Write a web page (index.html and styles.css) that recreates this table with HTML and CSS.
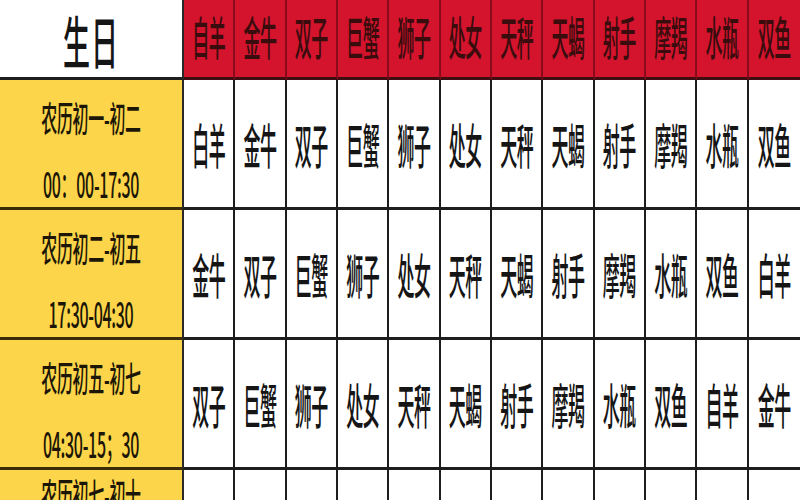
FILE: index.html
```html
<!DOCTYPE html>
<html lang="zh">
<head>
<meta charset="utf-8">
<title>生日星座对照表</title>
<link rel="stylesheet" href="styles.css">
</head>
<body>
<div class="chart">
  <div class="row head">
    <div class="title"><span class="t">生日</span></div>
    <div class="hsign"><span class="t">自羊</span></div>
    <div class="hsign"><span class="t">金牛</span></div>
    <div class="hsign"><span class="t">双子</span></div>
    <div class="hsign"><span class="t">巨蟹</span></div>
    <div class="hsign"><span class="t">狮子</span></div>
    <div class="hsign"><span class="t">处女</span></div>
    <div class="hsign"><span class="t">天秤</span></div>
    <div class="hsign"><span class="t">天蝎</span></div>
    <div class="hsign"><span class="t">射手</span></div>
    <div class="hsign"><span class="t">摩羯</span></div>
    <div class="hsign"><span class="t">水瓶</span></div>
    <div class="hsign"><span class="t">双鱼</span></div>
  </div>
  <div class="row">
    <div class="label"><span class="t">农历初一-初二</span><span class="t">00：00-17:30</span></div>
    <div class="sign"><span class="t">白羊</span></div>
    <div class="sign"><span class="t">金牛</span></div>
    <div class="sign"><span class="t">双子</span></div>
    <div class="sign"><span class="t">巨蟹</span></div>
    <div class="sign"><span class="t">狮子</span></div>
    <div class="sign"><span class="t">处女</span></div>
    <div class="sign"><span class="t">天秤</span></div>
    <div class="sign"><span class="t">天蝎</span></div>
    <div class="sign"><span class="t">射手</span></div>
    <div class="sign"><span class="t">摩羯</span></div>
    <div class="sign"><span class="t">水瓶</span></div>
    <div class="sign"><span class="t">双鱼</span></div>
  </div>
  <div class="row">
    <div class="label"><span class="t">农历初二-初五</span><span class="t">17:30-04:30</span></div>
    <div class="sign"><span class="t">金牛</span></div>
    <div class="sign"><span class="t">双子</span></div>
    <div class="sign"><span class="t">巨蟹</span></div>
    <div class="sign"><span class="t">狮子</span></div>
    <div class="sign"><span class="t">处女</span></div>
    <div class="sign"><span class="t">天秤</span></div>
    <div class="sign"><span class="t">天蝎</span></div>
    <div class="sign"><span class="t">射手</span></div>
    <div class="sign"><span class="t">摩羯</span></div>
    <div class="sign"><span class="t">水瓶</span></div>
    <div class="sign"><span class="t">双鱼</span></div>
    <div class="sign"><span class="t">白羊</span></div>
  </div>
  <div class="row">
    <div class="label"><span class="t">农历初五-初七</span><span class="t">04:30-15；30</span></div>
    <div class="sign"><span class="t">双子</span></div>
    <div class="sign"><span class="t">巨蟹</span></div>
    <div class="sign"><span class="t">狮子</span></div>
    <div class="sign"><span class="t">处女</span></div>
    <div class="sign"><span class="t">天秤</span></div>
    <div class="sign"><span class="t">天蝎</span></div>
    <div class="sign"><span class="t">射手</span></div>
    <div class="sign"><span class="t">摩羯</span></div>
    <div class="sign"><span class="t">水瓶</span></div>
    <div class="sign"><span class="t">双鱼</span></div>
    <div class="sign"><span class="t">自羊</span></div>
    <div class="sign"><span class="t">金牛</span></div>
  </div>
  <div class="row last">
    <div class="label"><span class="t">农历初七-初十</span></div>
    <div class="sign"></div>
    <div class="sign"></div>
    <div class="sign"></div>
    <div class="sign"></div>
    <div class="sign"></div>
    <div class="sign"></div>
    <div class="sign"></div>
    <div class="sign"></div>
    <div class="sign"></div>
    <div class="sign"></div>
    <div class="sign"></div>
    <div class="sign"></div>
  </div>
</div>
</body>
</html>
```
FILE: styles.css
```css
html, body {
  margin: 0;
  padding: 0;
  background: #ffffff;
}
body {
  width: 800px;
  height: 500px;
  overflow: hidden;
  font-family: "Noto Sans CJK SC", "Noto Sans", sans-serif;
  color: #151515;
}
.chart {
  width: 800px;
}
.row {
  display: grid;
  grid-template-columns: 184px repeat(12, 1fr);
  height: 130px;
}
.row.head {
  height: 80px;
}
.row.last {
  height: 30px;
}
.row > div {
  box-sizing: border-box;
  display: flex;
  align-items: center;
  justify-content: center;
  border-bottom: 3px solid #1e1e1e;
  box-shadow: 0 1px 1px rgba(0, 0, 0, 0.25);
}
.row.last > div {
  border-bottom: none;
  box-shadow: none;
}
.t {
  display: inline-block;
  white-space: nowrap;
}
.title {
  background: #ffffff;
  border-right: 2px solid #2a2a2a;
}
.title .t {
  font-size: 27px;
  font-weight: 500;
  line-height: 30px;
  transform: scaleY(2.1);
  letter-spacing: 1px;
  margin-top: 4px;
}
.hsign {
  background: #d3142c;
  border-right: 2px solid #8c0c1c;
  border-bottom-color: #3e0d12 !important;
}
.hsign:last-child {
  border-right: none;
}
.hsign .t {
  color: #3a0c0e;
  font-size: 17px;
  font-weight: 500;
  line-height: 20px;
  transform: scaleY(2.7);
  letter-spacing: -0.5px;
  margin-top: -6px;
}
.label {
  background: #fcd54a;
  border-right: 2px solid #2a2a2a;
  border-bottom-color: #3a2c08 !important;
  flex-direction: column;
  justify-content: flex-start !important;
  padding-top: 27px;
  gap: 46px;
}
.label .t {
  color: #1c1606;
  font-size: 16px;
  font-weight: 500;
  line-height: 20px;
  transform: scaleY(2.2);
  letter-spacing: -0.3px;
}
.row.last .label {
  padding-top: 14px;
}
.sign {
  background: #ffffff;
  border-right: 2px solid #1e1e1e;
}
.sign:last-child {
  border-right: none;
}
.sign .t {
  font-size: 17px;
  font-weight: 500;
  line-height: 20px;
  transform: scaleY(2.8);
  letter-spacing: -0.5px;
}
```
